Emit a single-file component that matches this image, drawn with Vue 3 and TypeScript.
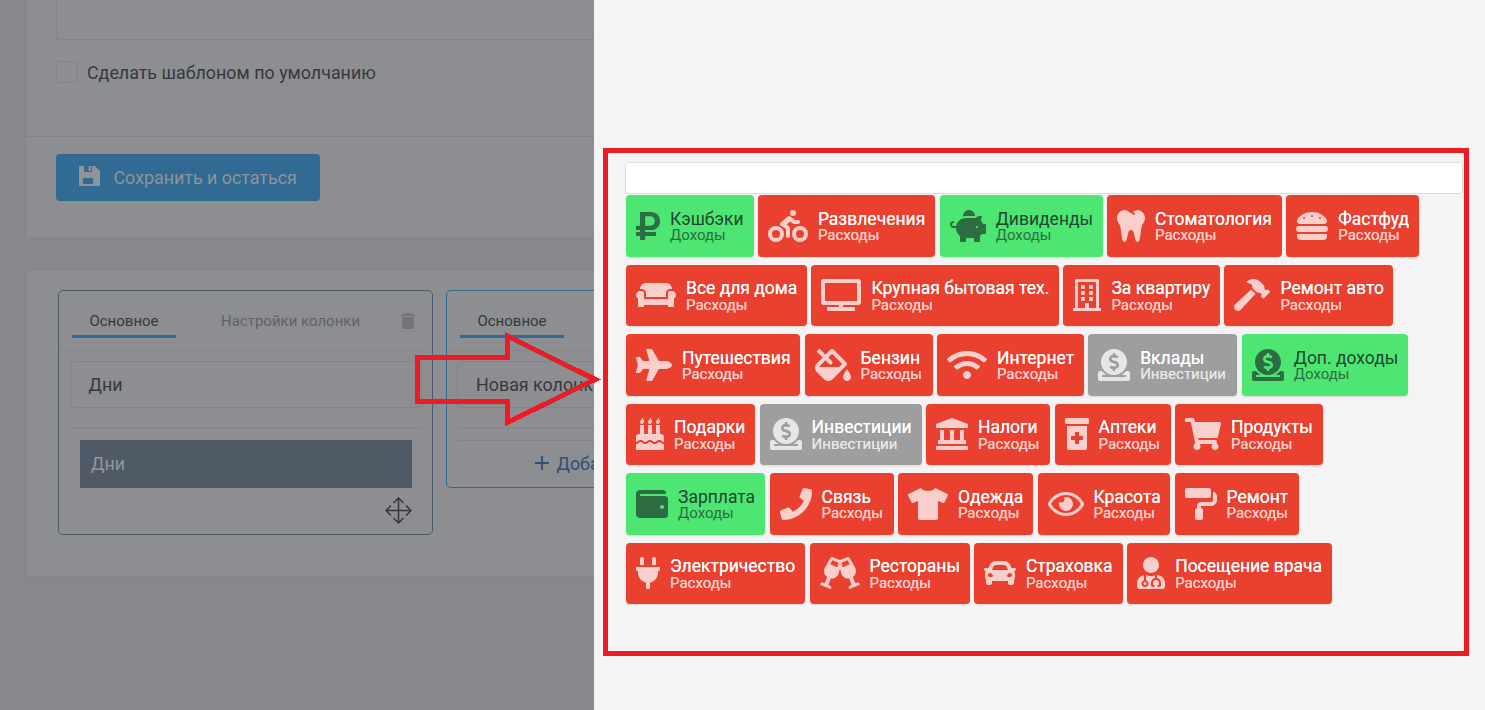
<script setup lang="ts">
type Kind = 'out' | 'in' | 'inv'
interface Tile { icon: string; name: string; kind: Kind; width: number }
interface Glyph { w: number; d: string }

const kindLabels: Record<Kind, string> = { out: 'Расходы', in: 'Доходы', inv: 'Инвестиции' }

const t = (icon: string, name: string, width: number, kind: Kind = 'out'): Tile => ({ icon, name, kind, width })

const rows: Tile[][] = [
  [t('ruble', 'Кэшбэки', 127.5, 'in'), t('biking', 'Развлечения', 177.4), t('piggy', 'Дивиденды', 163, 'in'), t('tooth', 'Стоматология', 174.8), t('burger', 'Фастфуд', 133)],
  [t('couch', 'Все для дома', 181.1), t('tv', 'Крупная бытовая тех.', 247.6), t('building', 'За квартиру', 156.6), t('hammer', 'Ремонт авто', 169)],
  [t('plane', 'Путешествия', 174.2), t('fill', 'Бензин', 128), t('wifi', 'Интернет', 146.8), t('donate', 'Вклады', 149.2, 'inv'), t('donate', 'Доп. доходы', 166, 'in')],
  [t('cake', 'Подарки', 129.2), t('donate', 'Инвестиции', 162, 'inv'), t('landmark', 'Налоги', 124.2), t('bottle', 'Аптеки', 116), t('cart', 'Продукты', 148)],
  [t('wallet', 'Зарплата', 139.2, 'in'), t('phone', 'Связь', 124), t('tshirt', 'Одежда', 135.2), t('eye', 'Красота', 132.6), t('roller', 'Ремонт', 124.4)],
  [t('plug', 'Электричество', 179.2), t('cheers', 'Рестораны', 160), t('car', 'Страховка', 148.8), t('doctor', 'Посещение врача', 204.8)],
]

const icons: Record<string, Glyph> = {
  ruble: { w: 384, d: 'M239.36 320C324.48 320 384 260.542 384 175.071S324.48 32 239.36 32H76c-6.627 0-12 5.373-12 12v206.632H12c-6.627 0-12 5.373-12 12V308c0 6.627 5.373 12 12 12h52v32H12c-6.627 0-12 5.373-12 12v40c0 6.627 5.373 12 12 12h52v52c0 6.627 5.373 12 12 12h58.56c6.627 0 12-5.373 12-12v-52H308c6.627 0 12-5.373 12-12v-40c0-6.627-5.373-12-12-12H146.56v-32h92.8zm-92.8-219.252h78.72c46.72 0 74.88 29.11 74.88 74.323 0 45.832-28.16 75.561-76.16 75.561h-77.44V100.748z' },
  biking: { w: 640, d: 'M400 96a48 48 0 1 0-48-48 48 48 0 0 0 48 48zm-4 121a31.9 31.9 0 0 0 20 7h64a32 32 0 0 0 0-64h-52.78L356 103a31.94 31.94 0 0 0-40.81.68l-112 96a32 32 0 0 0 3.08 50.92L288 305.12V416a32 32 0 0 0 64 0V288a32 32 0 0 0-14.25-26.62l-41.36-27.57 58.25-49.92zm116 39a128 128 0 1 0 128 128 128 128 0 0 0-128-128zm0 192a64 64 0 1 1 64-64 64 64 0 0 1-64 64zM128 256a128 128 0 1 0 128 128 128 128 0 0 0-128-128zm0 192a64 64 0 1 1 64-64 64 64 0 0 1-64 64z' },
  piggy: { w: 576, d: 'M560 224h-29.5c-8.8-20-21.6-37.7-37.4-52.5L512 96h-32c-29.4 0-55.4 13.5-73 34.3-7.6-1.1-15.1-2.3-23-2.3H256c-77.4 0-141.9 55-156.8 128H56c-14.8 0-26.5-13.5-23.5-28.8C34.7 215.8 45.4 208 57 208h1c3.3 0 6-2.7 6-6v-20c0-3.3-2.7-6-6-6-28.5 0-53.9 20.4-57.5 48.6C-3.9 258.8 22.7 288 56 288h40c0 52.2 25.4 98.1 64 127.3V496c0 8.8 7.2 16 16 16h64c8.8 0 16-7.2 16-16v-48h128v48c0 8.8 7.2 16 16 16h64c8.8 0 16-7.2 16-16v-80.7c11.8-8.9 22.3-19.4 31.3-31.3H560c8.8 0 16-7.2 16-16V240c0-8.8-7.2-16-16-16zm-128 64c-8.8 0-16-7.2-16-16s7.2-16 16-16 16 7.2 16 16-7.2 16-16 16zM256 96h128c5.4 0 10.7.4 15.9.8 0-.3.1-.5.1-.8 0-53-43-96-96-96s-96 43-96 96c0 2.1.5 4.1.6 6.2 15.2-3.9 31-6.2 47.4-6.2z' },
  tooth: { w: 448, d: 'M443.98 96.25c-11.01-45.22-47.11-82.06-92.01-93.72-32.19-8.36-63 5.1-89.14 24.33-3.25 2.39-6.96 3.73-10.5 5.48l28.32 18.21c7.42 4.77 9.58 14.67 4.8 22.11-4.46 6.95-14.27 9.86-22.11 4.8L162.83 12.84c-20.7-10.85-43.38-16.4-66.81-10.31-44.9 11.67-81 48.5-92.01 93.72-10.13 41.62-.42 80.81 21.5 110.43 23.36 31.57 32.68 68.66 36.29 107.35 4.4 47.16 10.33 94.16 20.94 140.32l7.8 33.95c3.19 13.87 15.49 23.7 29.67 23.7 13.97 0 26.15-9.55 29.54-23.16l34.47-138.42c4.56-18.32 20.96-31.16 39.76-31.16s35.2 12.85 39.76 31.16l34.47 138.42c3.39 13.61 15.57 23.16 29.54 23.16 14.18 0 26.48-9.83 29.67-23.7l7.8-33.95c10.61-46.15 16.53-93.16 20.94-140.32 3.61-38.7 12.93-75.78 36.29-107.35 21.95-29.61 31.66-68.8 21.53-110.43z' },
  burger: { w: 512, d: 'M464 256H48a48 48 0 0 0 0 96h416a48 48 0 0 0 0-96zm16 128H32a16 16 0 0 0-16 16v16a64 64 0 0 0 64 64h352a64 64 0 0 0 64-64v-16a16 16 0 0 0-16-16zM58.64 224h394.72c34.57 0 54.62-43.9 34.82-75.88C448 83.2 359.55 32.1 256 32c-103.54.1-192 51.2-232.18 116.11C4 180.09 24.07 224 58.64 224zM384 112a16 16 0 1 1-16 16 16 16 0 0 1 16-16zM256 80a16 16 0 1 1-16 16 16 16 0 0 1 16-16zm-128 32a16 16 0 1 1-16 16 16 16 0 0 1 16-16z' },
  couch: { w: 640, d: 'M160 224v64h320v-64c0-35.3 28.7-64 64-64h32c0-53-43-96-96-96H160c-53 0-96 43-96 96h32c35.3 0 64 28.7 64 64zm416-32h-32c-17.7 0-32 14.3-32 32v96H128v-96c0-17.7-14.3-32-32-32H64c-35.3 0-64 28.7-64 64 0 23.6 13 44 32 55.1V432c0 8.8 7.2 16 16 16h64c8.8 0 16-7.2 16-16v-16h384v16c0 8.8 7.2 16 16 16h64c8.8 0 16-7.2 16-16V311.1c19-11.1 32-31.5 32-55.1 0-35.3-28.7-64-64-64z' },
  tv: { w: 640, d: 'M592 0H48A48 48 0 0 0 0 48v320a48 48 0 0 0 48 48h240v32H112a16 16 0 0 0-16 16v32a16 16 0 0 0 16 16h416a16 16 0 0 0 16-16v-32a16 16 0 0 0-16-16H352v-32h240a48 48 0 0 0 48-48V48a48 48 0 0 0-48-48zm-16 352H64V64h512z' },
  building: { w: 448, d: 'M128 148v-40c0-6.6 5.4-12 12-12h40c6.6 0 12 5.4 12 12v40c0 6.6-5.4 12-12 12h-40c-6.6 0-12-5.4-12-12zm140 12h40c6.6 0 12-5.4 12-12v-40c0-6.6-5.4-12-12-12h-40c-6.6 0-12 5.4-12 12v40c0 6.6 5.4 12 12 12zm-128 96h40c6.6 0 12-5.4 12-12v-40c0-6.6-5.4-12-12-12h-40c-6.6 0-12 5.4-12 12v40c0 6.6 5.4 12 12 12zm128 0h40c6.6 0 12-5.4 12-12v-40c0-6.6-5.4-12-12-12h-40c-6.6 0-12 5.4-12 12v40c0 6.6 5.4 12 12 12zm-76 84v-40c0-6.6-5.4-12-12-12h-40c-6.6 0-12 5.4-12 12v40c0 6.6 5.4 12 12 12h40c6.6 0 12-5.4 12-12zm76 12h40c6.6 0 12-5.4 12-12v-40c0-6.6-5.4-12-12-12h-40c-6.6 0-12 5.4-12 12v40c0 6.6 5.4 12 12 12zm180 124v36H0v-36c0-6.6 5.4-12 12-12h19.5V24c0-13.3 10.7-24 24-24h337c13.3 0 24 10.7 24 24v440H436c6.6 0 12 5.4 12 12zM79.5 463H192v-67c0-6.6 5.4-12 12-12h40c6.6 0 12 5.4 12 12v67h112.5V49L80 48l-.5 415z' },
  hammer: { w: 576, d: 'M571.31 193.94l-22.63-22.63c-6.25-6.25-16.38-6.25-22.63 0l-11.31 11.31-28.9-28.9c5.63-21.31.36-44.9-16.35-61.61l-45.25-45.25c-62.48-62.48-163.79-62.48-226.28 0l90.51 45.25v18.75c0 16.97 6.74 33.25 18.75 45.25l49.14 49.14c16.71 16.71 40.3 21.98 61.61 16.35l28.9 28.9-11.31 11.31c-6.25 6.25-6.25 16.38 0 22.63l22.63 22.63c6.25 6.25 16.38 6.25 22.63 0l90.51-90.51c6.23-6.24 6.23-16.37-.02-22.62zm-286.72-15.2c-3.7-3.7-6.84-7.79-9.85-11.95L19.64 404.96c-25.57 23.88-26.26 64.19-1.53 88.93s65.05 24.05 88.92-1.53l238.13-255.07c-3.96-2.91-7.9-5.87-11.44-9.41l-49.13-49.14z' },
  plane: { w: 576, d: 'M480 192H365.71L260.61 8.06A16.014 16.014 0 0 0 246.71 0h-65.5c-10.63 0-18.3 10.17-15.38 20.39L214.86 192H112l-43.2-57.6c-3.02-4.03-7.77-6.4-12.8-6.4H16.01C5.6 128-2.04 137.78.49 147.88L32 256 .49 364.12C-2.04 374.22 5.6 384 16.01 384H56c5.04 0 9.78-2.37 12.8-6.4L112 320h102.86l-49.03 171.6c-2.92 10.22 4.75 20.4 15.38 20.4h65.5c5.74 0 11.04-3.08 13.89-8.06L365.71 320H480c35.35 0 96-28.65 96-64s-60.65-64-96-64z' },
  fill: { w: 576, d: 'M512 320s-64 92.65-64 128c0 35.35 28.66 64 64 64s64-28.65 64-64-64-128-64-128zm-9.37-102.94L294.94 9.37C288.69 3.12 280.5 0 272.31 0s-16.38 3.12-22.62 9.37l-81.58 81.58L81.93 4.76c-6.25-6.25-16.38-6.25-22.62 0L36.69 27.38c-6.24 6.25-6.24 16.38 0 22.62l86.19 86.18-94.76 94.76c-37.49 37.48-37.49 98.26 0 135.75l117.19 117.19c18.74 18.74 43.31 28.12 67.87 28.12 24.57 0 49.13-9.37 67.87-28.12l221.57-221.57c12.5-12.5 12.5-32.75.01-45.25zm-116.22 70.97H65.93c1.36-3.84 3.57-7.98 7.43-11.83l13.15-13.15 81.61-81.61 58.6 58.6c12.49 12.49 32.75 12.49 45.24 0s12.49-32.75 0-45.24l-58.6-58.6 58.95-58.95 162.44 162.44-48.34 48.34z' },
  wifi: { w: 640, d: 'M634.91 154.88C457.74-8.99 182.19-8.93 5.09 154.88c-6.66 6.16-6.79 16.59-.35 22.98l34.24 33.97c6.14 6.1 16.02 6.23 22.4.38 145.92-133.68 371.3-133.71 517.25 0 6.38 5.85 16.26 5.71 22.4-.38l34.24-33.97c6.43-6.39 6.3-16.82-.36-22.98zM320 352c-35.35 0-64 28.65-64 64s28.65 64 64 64 64-28.65 64-64-28.65-64-64-64zm202.67-83.59c-115.26-101.93-290.21-101.82-405.34 0-6.9 6.1-7.12 16.69-.57 23.15l34.44 33.99c6 5.92 15.66 6.32 22.05.8 83.95-72.57 209.74-72.41 293.49 0 6.39 5.52 16.05 5.13 22.05-.8l34.44-33.99c6.56-6.46 6.33-17.06-.56-23.15z' },
  donate: { w: 512, d: 'M256 416c114.9 0 208-93.1 208-208S370.9 0 256 0 48 93.1 48 208s93.1 208 208 208zM233.8 97.4V80.6c0-9.2 7.4-16.6 16.6-16.6h11.1c9.2 0 16.6 7.4 16.6 16.6v17c15.5.8 30.5 6.1 43 15.4 5.6 4.1 6.2 12.3 1.2 17.1L306 145.6c-3.8 3.7-9.5 3.8-14 1-5.4-3.4-11.4-5.1-17.8-5.1h-38.9c-9 0-16.3 8.2-16.3 18.3 0 8.2 5 15.5 12.1 17.6l62.3 18.7c25.7 7.7 43.7 32.4 43.7 60.1 0 34-26.4 61.5-59.1 62.4v16.8c0 9.2-7.4 16.6-16.6 16.6h-11.1c-9.2 0-16.6-7.4-16.6-16.6v-17c-15.5-.8-30.5-6.1-43-15.4-5.6-4.1-6.2-12.3-1.2-17.1l16.3-15.5c3.8-3.7 9.5-3.8 14-1 5.4 3.4 11.4 5.1 17.8 5.1h38.9c9 0 16.3-8.2 16.3-18.3 0-8.2-5-15.5-12.1-17.6l-62.3-18.7c-25.7-7.7-43.7-32.4-43.7-60.1.1-34 26.4-61.5 59.1-62.4zM480 352h-32.5c-19.6 26-44.6 47.7-73 64h63.8c5.3 0 9.6 3.6 9.6 8v16c0 4.4-4.3 8-9.6 8H73.6c-5.3 0-9.6-3.6-9.6-8v-16c0-4.4 4.3-8 9.6-8h63.8c-28.4-16.3-53.3-38-73-64H32c-17.7 0-32 14.3-32 32v96c0 17.7 14.3 32 32 32h448c17.7 0 32-14.3 32-32v-96c0-17.7-14.3-32-32-32z' },
  cake: { w: 448, d: 'M448 384c-28.02 0-31.26-32-74.5-32-43.43 0-46.825 32-74.75 32-27.695 0-31.454-32-74.75-32-42.842 0-47.218 32-74.5 32-28.148 0-31.202-32-74.75-32-43.547 0-46.653 32-74.75 32v-80c0-26.5 21.5-48 48-48h16V112h64v144h64V112h64v144h64V112h64v144h16c26.5 0 48 21.5 48 48v80zm0 128H0v-96c43.356 0 46.767-32 74.75-32 27.951 0 31.253 32 74.75 32 42.843 0 47.217-32 74.5-32 28.148 0 31.201 32 74.75 32 43.357 0 46.767-32 74.75-32 27.488 0 31.252 32 74.5 32v96zM96 96c-17.75 0-32-14.25-32-32 0-31 32-23 32-64 12 0 32 29.5 32 56s-14.25 40-32 40zm128 0c-17.75 0-32-14.25-32-32 0-31 32-23 32-64 12 0 32 29.5 32 56s-14.25 40-32 40zm128 0c-17.75 0-32-14.25-32-32 0-31 32-23 32-64 12 0 32 29.5 32 56s-14.25 40-32 40z' },
  landmark: { w: 512, d: 'M501.62 92.11L267.24 2.04a31.958 31.958 0 0 0-22.47 0L10.38 92.11A16.001 16.001 0 0 0 0 107.09V144c0 8.84 7.16 16 16 16h480c8.84 0 16-7.16 16-16v-36.91c0-6.67-4.14-12.64-10.38-14.98zM64 192v160H48c-8.84 0-16 7.16-16 16v48h448v-48c0-8.84-7.16-16-16-16h-16V192h-64v160h-96V192h-64v160h-96V192H64zm432 256H16c-8.84 0-16 7.16-16 16v32c0 8.84 7.16 16 16 16h480c8.84 0 16-7.16 16-16v-32c0-8.84-7.16-16-16-16z' },
  bottle: { w: 384, d: 'M360 0H24C10.8 0 0 10.8 0 24v48c0 13.2 10.8 24 24 24h336c13.2 0 24-10.8 24-24V24c0-13.2-10.8-24-24-24zM32 480c0 17.6 14.4 32 32 32h256c17.6 0 32-14.4 32-32V128H32v352zm64-184c0-4.4 3.6-8 8-8h56v-56c0-4.4 3.6-8 8-8h48c4.4 0 8 3.6 8 8v56h56c4.4 0 8 3.6 8 8v48c0 4.4-3.6 8-8 8h-56v56c0 4.4-3.6 8-8 8h-48c-4.4 0-8-3.6-8-8v-56h-56c-4.4 0-8-3.6-8-8v-48z' },
  cart: { w: 576, d: 'M528.12 301.319l47.273-208C578.806 78.301 567.391 64 551.99 64H159.208l-9.166-44.81C147.758 8.021 137.93 0 126.529 0H24C10.745 0 0 10.745 0 24v16c0 13.255 10.745 24 24 24h69.883l70.248 343.435C147.325 417.1 136 435.222 136 456c0 30.928 25.072 56 56 56s56-25.072 56-56c0-15.674-6.447-29.835-16.824-40h209.647C430.447 426.165 424 440.326 424 456c0 30.928 25.072 56 56 56s56-25.072 56-56c0-22.172-12.888-41.332-31.579-50.405l5.517-24.276c3.413-15.018-8.002-29.319-23.403-29.319H218.117l-6.545-32h293.145c11.206 0 20.92-7.754 23.403-18.681z' },
  wallet: { w: 512, d: 'M461.2 128H80c-8.84 0-16-7.16-16-16s7.16-16 16-16h384c8.84 0 16-7.16 16-16 0-26.51-21.49-48-48-48H64C28.65 32 0 60.65 0 96v320c0 35.35 28.65 64 64 64h397.2c28.02 0 50.8-21.53 50.8-48V176c0-26.47-22.78-48-50.8-48zM416 336c-17.67 0-32-14.33-32-32s14.33-32 32-32 32 14.33 32 32-14.33 32-32 32z' },
  phone: { w: 512, d: 'M493.4 24.6l-104-24c-11.3-2.6-22.9 3.3-27.5 13.9l-48 112c-4.2 9.8-1.4 21.3 6.9 28l60.6 49.6c-36 76.7-98.9 140.5-177.2 177.2l-49.6-60.6c-6.8-8.3-18.2-11.1-28-6.9l-112 48C3.9 366.5-2 378.1.6 389.4l24 104C27.1 504.2 36.7 512 48 512c256.1 0 464-207.5 464-464 0-11.2-7.7-20.9-18.6-23.4z' },
  tshirt: { w: 640, d: 'M631.2 96.5L436.5 0C416.4 27.8 371.9 47.2 320 47.2S223.6 27.8 203.5 0L8.8 96.5c-7.9 4-11.1 13.6-7.2 21.5l57.2 114.5c4 7.9 13.6 11.1 21.5 7.2l56.6-27.7c10.6-5.2 23 2.5 23 14.4V480c0 17.7 14.3 32 32 32h256c17.7 0 32-14.3 32-32V226.3c0-11.8 12.4-19.6 23-14.4l56.6 27.7c7.9 4 17.5.8 21.5-7.2L638.3 118c4-7.9.8-17.6-7.1-21.5z' },
  eye: { w: 576, d: 'M288 144a110.94 110.94 0 0 0-31.24 5 55.4 55.4 0 0 1 7.24 27 56 56 0 0 1-56 56 55.4 55.4 0 0 1-27-7.24A111.71 111.71 0 1 0 288 144zm284.52 97.4C518.29 135.59 410.93 64 288 64S57.68 135.64 3.48 241.41a32.35 32.35 0 0 0 0 29.19C57.71 376.41 165.07 448 288 448s230.32-71.64 284.52-177.41a32.35 32.35 0 0 0 0-29.19zM288 400c-98.65 0-189.09-55-237.93-144C98.91 167 189.34 112 288 112s189.09 55 237.93 144C477.1 345 386.66 400 288 400z' },
  roller: { w: 512, d: 'M416 128V32c0-17.67-14.33-32-32-32H32C14.33 0 0 14.33 0 32v96c0 17.67 14.33 32 32 32h352c17.67 0 32-14.33 32-32zm32-64v128c0 17.67-14.33 32-32 32H256c-35.35 0-64 28.65-64 64v32c-17.67 0-32 14.33-32 32v128c0 17.67 14.33 32 32 32h64c17.67 0 32-14.33 32-32V352c0-17.67-14.33-32-32-32v-32h160c53.02 0 96-42.98 96-96v-64c0-35.35-28.65-64-64-64z' },
  plug: { w: 384, d: 'M320 32a32 32 0 0 0-64 0v96h64zm48 128H16a16 16 0 0 0-16 16v32a16 16 0 0 0 16 16h16v32a160.07 160.07 0 0 0 128 156.8V512h64v-99.2A160.07 160.07 0 0 0 352 256v-32h16a16 16 0 0 0 16-16v-32a16 16 0 0 0-16-16zM128 32a32 32 0 0 0-64 0v96h64z' },
  cheers: { w: 640, d: 'M639.4 433.6c-8.4-20.4-31.8-30.1-52.2-21.6l-22.1 9.2-38.7-101.9c47.9-35 64.8-100.3 34.5-152.8L474.3 16c-8-13.9-25.1-19.7-40-13.6L320 49.8 205.7 2.4c-14.9-6.1-32-.3-40 13.6L79.1 166.5C48.9 219 65.7 284.3 113.6 319.2L74.9 421.1l-22.1-9.2c-20.4-8.5-43.7 1.2-52.2 21.6-1.7 4.1.2 8.8 4.3 10.5l162.3 67.4c4.1 1.7 8.7-.2 10.4-4.3 8.4-20.4-1.2-43.8-21.6-52.3l-22.1-9.2L173.3 342c4.4.5 8.8 1.3 13.1 1.3 51.7 0 99.4-33.1 113.4-85.3l20.2-75.4 20.2 75.4c14 52.2 61.7 85.3 113.4 85.3 4.3 0 8.7-.8 13.1-1.3L506 445.6l-22.1 9.2c-20.4 8.5-30.1 31.9-21.6 52.3 1.7 4.1 6.4 6 10.4 4.3L635.1 444c4-1.7 6-6.3 4.3-10.4zM275.9 162.1l-112.1-46.5 36.5-63.4 94.5 39.2-18.9 70.7zm88.2 0l-18.9-70.7 94.5-39.2 36.5 63.4-112.1 46.5z' },
  car: { w: 512, d: 'M499.99 176h-59.87l-16.64-41.6C406.38 91.63 365.57 64 319.5 64h-127c-46.06 0-86.88 27.63-103.99 70.4L71.87 176H12.01C4.2 176-1.53 183.34.37 190.91l6 24C7.7 220.25 12.5 224 18.01 224h20.07C24.65 235.73 16 252.78 16 272v48c0 16.12 6.16 30.67 16 41.93V416c0 17.67 14.33 32 32 32h32c17.67 0 32-14.33 32-32v-32h256v32c0 17.67 14.33 32 32 32h32c17.67 0 32-14.33 32-32v-54.07c9.84-11.25 16-25.8 16-41.93v-48c0-19.22-8.65-36.27-22.07-48H494c5.51 0 10.31-3.75 11.64-9.09l6-24c1.89-7.57-3.84-14.91-11.65-14.91zm-352.06-17.83c7.29-18.22 24.94-30.17 44.57-30.17h127c19.63 0 37.28 11.95 44.57 30.17L384 208H128l19.93-49.83zM96 319.8c-19.2 0-32-12.76-32-31.9S76.8 256 96 256s48 28.71 48 47.85-28.8 15.95-48 15.95zm320 0c-19.2 0-48 3.19-48-15.95S396.8 256 416 256s32 12.76 32 31.9-12.8 31.9-32 31.9z' },
  doctor: { w: 448, d: 'M224 256c70.7 0 128-57.3 128-128S294.7 0 224 0 96 57.3 96 128s57.3 128 128 128zM104 424c0 13.3 10.7 24 24 24s24-10.7 24-24-10.7-24-24-24-24 10.7-24 24zm216-135.4v49c36.5 7.4 64 39.8 64 78.4v41.7c0 7.6-5.4 14.2-12.9 15.7l-32.2 6.4c-4.3.9-8.5-1.9-9.4-6.3l-3.1-15.7c-.9-4.3 1.9-8.6 6.3-9.4l19.3-3.9V416c0-62.8-96-65.1-96 1.9v26.7l19.3 3.9c4.3.9 7.1 5.1 6.3 9.4l-3.1 15.7c-.9 4.3-5.1 7.1-9.4 6.3l-31.2-4.2c-7.9-1.1-13.8-7.8-13.8-15.9V416c0-38.6 27.5-70.9 64-78.4v-45.2c-2.2.7-4.4 1.1-6.6 1.9-18 6.3-37.3 9.8-57.4 9.8s-39.4-3.5-57.4-9.8c-7.4-2.6-14.9-4.2-22.6-5.2v81.6c23.1 6.9 40 28.1 40 53.4 0 30.9-25.1 56-56 56s-56-25.1-56-56c0-25.3 16.9-46.5 40-53.4v-80.4C48.5 301 0 355.8 0 422.4v44.8C0 491.9 20.1 512 44.8 512h358.4c24.7 0 44.8-20.1 44.8-44.8v-44.8c0-72-56.8-130.3-128-133.8z' },
}
</script>

<template>
  <div class="page">
    <section class="editor">
      <div class="card form-card">
        <div class="text-area"></div>
        <label class="check"><span class="box"></span>Сделать шаблоном по умолчанию</label>
        <div class="actions">
          <button class="save" type="button">
            <svg width="21" height="20" viewBox="0 0 21 20">
              <path fill="currentColor" fill-rule="evenodd" d="M1 0H5V6H13V0H16L21 5V19Q21 20 20 20H1Q0 20 0 19V1Q0 0 1 0ZM4 12V18H14V12Z" />
              <path fill="currentColor" d="M9.500 0H12V5H9.500Z" />
            </svg>
            <span>Сохранить и остаться</span>
          </button>
        </div>
      </div>

      <div class="card columns-card">
        <div class="column slate">
          <div class="tabs">
            <span class="tab active">Основное</span>
            <span class="tab settings">Настройки колонки</span>
            <svg class="trash" width="14" height="16" viewBox="0 0 14 16">
              <path fill="currentColor" d="M4.500 0h5l1 1.300H14V3H0V1.300h3.500zM1 4h12v10.500q0 1.500-1.500 1.500h-9Q1 16 1 14.500z" />
            </svg>
          </div>
          <div class="field">Дни</div>
          <hr />
          <div class="block">Дни</div>
          <div class="move-row">
            <svg width="27" height="27" viewBox="0 0 27 27" fill="none" stroke="currentColor" stroke-width="1.5">
              <path d="M13.500 1V26M1 13.500H26M8.500 6L13.500 1L18.500 6M8.500 21L13.500 26L18.500 21M6 8.500L1 13.500L6 18.500M21 8.500L26 13.500L21 18.500" />
            </svg>
          </div>
        </div>
        <div class="column blue">
          <div class="tabs"><span class="tab active">Основное</span></div>
          <div class="field">Новая колонка</div>
          <hr />
          <hr class="second" />
          <div class="add">
            <svg width="14" height="14" viewBox="0 0 14 14"><path d="M7 0V14M0 7H14" stroke="currentColor" stroke-width="1.8" /></svg>
            <span>Добавить</span>
          </div>
        </div>
      </div>
    </section>

    <aside class="drawer">
      <div class="frame">
        <input class="search" type="text" />
        <div class="tiles">
          <div v-for="(row, i) in rows" :key="i" class="row">
            <div v-for="tile in row" :key="tile.name" class="tile" :class="tile.kind" :style="{ width: tile.width + 'px' }">
              <svg class="icon" :width="icons[tile.icon].w / 16" height="32" :viewBox="`0 0 ${icons[tile.icon].w} 512`">
                <path fill="currentColor" :d="icons[tile.icon].d" />
              </svg>
              <div class="labels">
                <div class="name">{{ tile.name }}</div>
                <div class="kind">{{ kindLabels[tile.kind] }}</div>
              </div>
            </div>
          </div>
        </div>
      </div>
    </aside>

    <svg class="arrow" width="200" height="110" viewBox="405 325 200 110" shape-rendering="crispEdges">
      <path d="M417.500 357.500H507.500V336L595 379.500L507.500 422.500V401.500H417.500Z" fill="none" stroke="#ed1c24" stroke-width="5" />
    </svg>
  </div>
</template>

<style>
body { margin: 0; overflow: hidden; }
</style>

<style scoped>
* { box-sizing: border-box; }
.page {
  position: relative;
  display: flex;
  width: 1485px;
  height: 710px;
  overflow: hidden;
  font-family: Roboto, "Liberation Sans", sans-serif;
  background: #f5f5f5;
}
.editor {
  width: 594px;
  height: 710px;
  flex: none;
  overflow: hidden;
  padding-left: 25px;
  background: #87888b;
  color: #36383f;
  font-size: 17.880px;
}
.card { width: 700px; background: #8c8e91; border: 1px solid #828488; border-radius: 4px; }
.form-card { height: 239px; border-top: 0; border-radius: 0 0 4px 4px; }
.text-area { height: 40px; margin-left: 30px; border: 1px solid #818386; border-top: 0; border-radius: 0 0 4px 4px; }
.check { display: flex; align-items: center; height: 22px; margin: 21px 0 0 30px; gap: 9px; }
.box { width: 22px; height: 22px; border: 1px solid #818386; border-radius: 4px; }
.actions { margin-top: 53px; padding: 17px 0 0 30px; border-top: 1px solid #818386; }
.save {
  display: flex; align-items: center; gap: 13.500px;
  width: 264px; height: 47px; padding: 0 0 0 23px;
  border: 0; border-radius: 4px; background: #316a92; color: #909498;
  font: 17.880px Roboto, "Liberation Sans", sans-serif;
}
.save svg { margin-top: -3px; }
.columns-card { display: flex; align-items: flex-start; gap: 13px; height: 308px; margin-top: 30px; padding: 20px 0 0 32px; }
.column { width: 375px; flex: none; border: 1px solid; border-radius: 5px; padding: 0 10px 0 11px; }
.slate { height: 245px; border-color: #4b5a69; }
.blue { height: 198px; border-color: #316a92; padding-left: 10px; }
.tabs { display: flex; align-items: flex-start; height: 60px; margin: 0 -8px; padding: 12px 0 0 10px; border-bottom: 1px solid #858789; font-size: 15px; }
.blue .tabs { padding-left: 11px; }
.tab { height: 35px; line-height: 36px; color: #606267; }
.tab.active { width: 104px; text-align: center; border-bottom: 3px solid #316a92; color: #36383f; }
.settings { margin-left: 45px; }
.trash { margin: 10px 0 0 41px; color: #727477; }
.field { height: 47px; margin-top: 10px; padding-left: 17.500px; line-height: 46px; border: 1px solid #828487; border-radius: 4px; white-space: nowrap; }
.blue .field { padding-left: 18px; }
hr { height: 1px; margin: 20px 0 0; border: 0; background: #828487; }
.second { margin-top: 11px; }
.block { width: 332px; height: 48px; margin: 11px 0 0 10px; padding-left: 11px; line-height: 48px; background: #505a66; color: #93979b; }
.move-row { display: flex; justify-content: flex-end; padding: 9px 10px 0 0; color: #34363c; }
.add { display: flex; align-items: center; gap: 8px; height: 45px; padding-left: 77.500px; color: #2d4f7c; white-space: nowrap; }
.add svg { margin-top: -1px; }
.drawer { flex: 1; padding: 148px 0 0 9px; background: #f5f5f5; }
.frame { width: 866px; height: 508px; border: 5px solid #ed1c24; padding: 9px 0 0 17px; background: #f4f4f4; }
.search { display: block; width: 838px; height: 32px; border: 1px solid #dcdcdc; border-radius: 4px; background: #fff; }
.tiles { display: flex; flex-direction: column; gap: 8px; padding: 1px 0 0 1px; }
.row { display: flex; gap: 4.400px; height: 61.500px; }
.tile {
  display: flex; align-items: center; gap: 10px; flex: none;
  padding-left: 10px; border-radius: 4px; white-space: nowrap;
  box-shadow: 0 1px 2px rgba(0, 0, 0, .12);
}
.out { background: #ea4030; color: #fff; }
.inv { background: #9e9e9e; color: #fff; }
.in { background: #4de673; color: #224531; }
.icon { flex: none; opacity: .75; }
.labels { padding-top: 1.500px; }
.name { font-size: 17.500px; line-height: 18px; text-shadow: 0 0 .5px currentColor; }
.labels .kind { margin-top: -.5px; font-size: 15px; line-height: 16px; opacity: .75; text-shadow: 0 0 .5px currentColor; }
.in .name, .in .labels .kind { text-shadow: none; }
.arrow { position: absolute; left: 405px; top: 325px; }
</style>
